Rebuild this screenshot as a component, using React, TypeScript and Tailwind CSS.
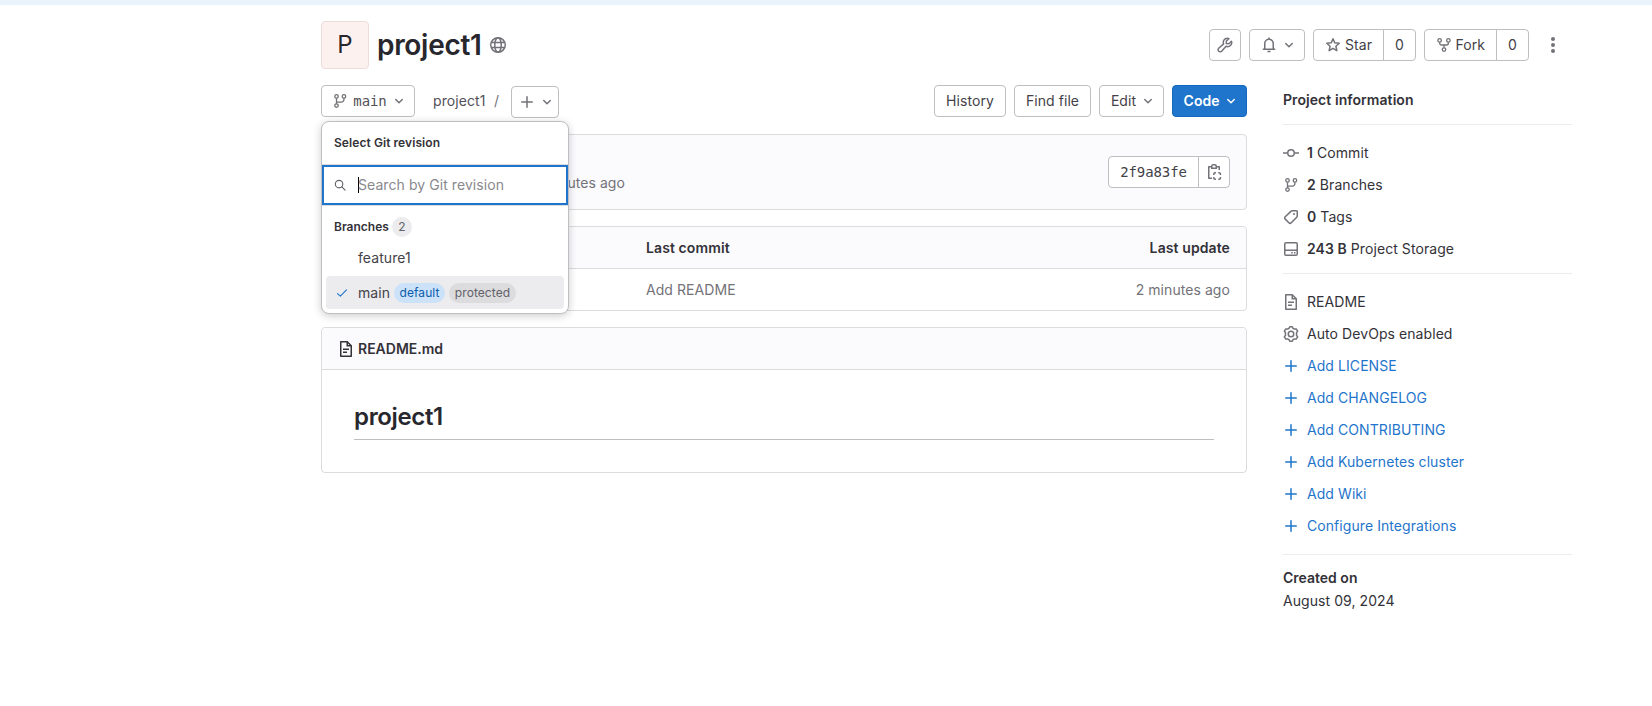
import type { FC, ReactNode } from 'react';

interface IconProps {
  name: keyof typeof icons
  className?: string
}

const icons = {
  branch: (
    <>
      <circle cx="4" cy="2.750" r="2" />
      <circle cx="12.500" cy="2.750" r="2" />
      <circle cx="4" cy="13.250" r="2" />
      <path d="M4 4.750v6.500M4 9.250h5.500a3 3 0 0 0 3-3v-1.500" />
    </>
  ),
  fork: (
    <>
      <circle cx="3" cy="2.750" r="2" />
      <circle cx="13" cy="2.750" r="2" />
      <circle cx="8" cy="13.250" r="2" />
      <path d="M3 4.750v1a2.250 2.250 0 0 0 2.250 2.250h5.500A2.250 2.250 0 0 0 13 5.750v-1M8 8v3.250" />
    </>
  ),
  chevron: <path d="M4.750 6.500 8 9.750l3.250-3.250" strokeLinecap="round" strokeLinejoin="round" />,
  plus: <path d="M8 2.750v10.500M2.750 8h10.500" strokeLinecap="round" />,
  globe: (
    <>
      <circle cx="8" cy="8" r="7.250" />
      <ellipse cx="8" cy="8" rx="3.250" ry="7.250" />
      <path d="M1.500 5.500h13M1.500 10.500h13" />
    </>
  ),
  wrench: (
    <path
      d="M10.250 1.250a4 4 0 0 0-3.600 5.650L1.700 11.300a1.900 1.900 0 1 0 2.900 2.900l4.500-4.900a4 4 0 0 0 5.350-5.050L11.800 6.700 9.300 6.600 9.250 4.200l2.650-2.600a4 4 0 0 0-1.650-.350z"
      strokeLinejoin="round"
    />
  ),
  bell: (
    <path
      d="M8 .500v1.250M3.750 12.250v-5.750a4.250 4.250 0 0 1 8.500 0v5.750M1.750 12.250h12.500M6.500 14.500h3"
      strokeLinejoin="round"
    />
  ),
  star: (
    <path
      d="m8 1.800 1.800 4.050 4.450.450-3.350 2.950.950 4.350L8 11.350 4.150 13.600l.950-4.350L1.750 6.300l4.450-.450z"
      strokeLinejoin="round"
    />
  ),
  search: (
    <>
      <circle cx="6.750" cy="6.750" r="5" />
      <path d="m10.500 10.500 4.250 4.250" strokeLinecap="round" />
    </>
  ),
  check: <path d="m2 8.750 3.750 3.500 8.250-8.500" strokeLinecap="round" strokeLinejoin="round" />,
  document: (
    <>
      <path d="M2.750.750h6.500l4 4v10.500H2.750z" strokeLinejoin="round" />
      <path d="M9.250.750v4h4M5 8.250h6M5 11.250h4" />
    </>
  ),
  commit: (
    <>
      <circle cx="8" cy="8" r="3.250" />
      <path d="M0 8h4.750M11.250 8H16" />
    </>
  ),
  tag: (
    <>
      <path
        d="M9.300 1.750h4.200a.750.750 0 0 1 .750.750v4.300a2 2 0 0 1-.550 1.400l-5.450 5.550a1.700 1.700 0 0 1-2.400 0L2.250 10.150a1.700 1.700 0 0 1 0-2.400l5.600-5.400a2 2 0 0 1 1.450-.600z"
        strokeLinejoin="round"
      />
      <circle cx="11" cy="5" r="1" fill="currentColor" stroke="none" />
    </>
  ),
  disk: (
    <>
      <rect x="1.750" y="1.750" width="12.500" height="12.500" rx="1.250" />
      <path d="M1.750 9.250h12.500M8.200 11.750h1.500M11 11.750h1.500" />
    </>
  ),
  gear: (
    <>
      <circle cx="8" cy="8" r="2.750" />
      <path
        d="M6.750.750h2.500l.650 1.500 1.500.850 1.800-.200 1.450 2.300-1.100 1.300v3l1.100 1.300-1.450 2.300-1.800-.200-1.500.850-.650 1.500h-2.500l-.650-1.500-1.500-.850-1.800.200-1.450-2.300 1.100-1.300v-3l-1.100-1.300 1.450-2.300 1.800.200 1.500-.850z"
        strokeLinejoin="round"
      />
    </>
  ),
  clipboard: (
    <>
      <path d="M5.250 2.750h-2.500v11.500H6M10.750 2.750h2.500V6" strokeLinejoin="round" />
      <path d="M5.750 4.250v-2A1.500 1.500 0 0 1 7.250.750h1.500a1.500 1.500 0 0 1 1.500 1.500v2z" />
      <path d="M7.750 11v-.750a1.500 1.500 0 0 1 1.500-1.500H10M12.250 8.750H13a1.500 1.500 0 0 1 1.500 1.500V11M14.500 13v.750a1.500 1.500 0 0 1-1.500 1.500h-.750M10 15.250h-.750a1.500 1.500 0 0 1-1.500-1.500V13" />
    </>
  ),
  dots: (
    <g fill="currentColor" stroke="none">
      <circle cx="8" cy="2" r="2" />
      <circle cx="8" cy="8" r="2" />
      <circle cx="8" cy="14" r="2" />
    </g>
  ),
};

const Icon: FC<IconProps> = ({ name, className = 'size-4 text-[#737278]' }) => (
  <svg
    className={`shrink-0 ${className}`}
    viewBox="0 0 16 16"
    fill="none"
    stroke="currentColor"
    strokeWidth="1.5"
  >
    {icons[name]}
  </svg>
);

interface ButtonProps {
  children: ReactNode
  className?: string
}

const Button: FC<ButtonProps> = ({ children, className = '' }) => (
  <button
    type="button"
    className={`flex h-8 shrink-0 items-center justify-center rounded border border-[#bfbfc3] bg-white ${className}`}
  >
    {children}
  </button>
);

const stats: { icon: IconProps['name'], value: string, label: string }[] = [
  { icon: 'commit', value: '1', label: 'Commit' },
  { icon: 'branch', value: '2', label: 'Branches' },
  { icon: 'tag', value: '0', label: 'Tags' },
  { icon: 'disk', value: '243 B', label: 'Project Storage' },
];

const addLinks = [
  'Add LICENSE',
  'Add CHANGELOG',
  'Add CONTRIBUTING',
  'Add Kubernetes cluster',
  'Add Wiki',
  'Configure Integrations',
];

const ProjectHeader: FC = () => (
  <header className="flex h-12 items-center">
    <div className="flex size-12 items-center justify-center rounded border border-[#ecdcda] bg-[#fcf1ef] text-2xl text-[#28272d]">
      P
    </div>
    <h1 className="ml-2 w-[105px] text-[28px] font-semibold tracking-[-0.3px] whitespace-nowrap text-[#28272d]">project1</h1>
    <Icon name="globe" className="ml-2 size-4 text-[#737278]" />
    <div className="mr-[3px] ml-auto flex items-center gap-2">
      <Button className="w-8"><Icon name="wrench" /></Button>
      <Button className="w-14 gap-1 pl-1">
        <Icon name="bell" />
        <Icon name="chevron" />
      </Button>
      <div className="flex">
        <Button className="w-[71px] gap-1 rounded-r-none">
          <Icon name="star" />
          <span className="w-[27px]">Star</span>
        </Button>
        <Button className="-ml-px w-[33px] rounded-l-none">0</Button>
      </div>
      <div className="flex">
        <Button className="w-[73px] gap-[5px] rounded-r-none">
          <Icon name="fork" className="size-3.5 text-[#737278]" />
          <span className="w-[29px]">Fork</span>
        </Button>
        <Button className="-ml-px w-[33px] rounded-l-none">0</Button>
      </div>
      <button type="button" className="flex size-8 items-center justify-center">
        <Icon name="dots" />
      </button>
    </div>
  </header>
);

const RevisionDropdown: FC = () => (
  <div className="absolute top-9 left-0 z-10 h-[193px] w-[248px] rounded-lg border border-[#bfbfc3] bg-white shadow-[0_2px_8px_rgba(0,0,0,0.2)]">
    <div className="flex h-[43px] items-center border-b border-[#dcdcde] px-3 text-xs font-semibold text-[#333238]">
      Select Git revision
    </div>
    <div className="flex h-10 items-center border-2 border-[#1f75cb] px-2.5">
      <Icon name="search" className="size-3 text-[#626168]" />
      <span className="ml-3 h-4 w-px bg-black" />
      <span className="-ml-px text-[#89888d]">Search by Git revision</span>
    </div>
    <div className="flex h-[42px] items-center border-t border-[#dcdcde] px-3 text-xs">
      <span className="w-[54px] font-semibold tracking-normal text-[#333238]">Branches</span>
      <span className="ml-1 flex size-5 items-center justify-center rounded-full bg-[#ececef] text-[#626168]">2</span>
    </div>
    <div className="flex h-[29px] items-start pt-px pl-9 leading-5">feature1</div>
    <div className="mx-1 flex h-[33px] items-center rounded bg-[#ececef] pl-2.5">
      <Icon name="check" className="size-3 text-[#1f75cb]" />
      <span className="ml-2.5 w-[32px]">main</span>
      <span className="ml-1 flex h-5 w-[51px] items-center justify-center rounded-full bg-[#cbe2f9] text-xs text-[#0b5cad]">default</span>
      <span className="ml-1 flex h-5 w-[67px] items-center justify-center rounded-full bg-[#dcdcde] text-xs text-[#626168]">protected</span>
    </div>
  </div>
);

const TreeControls: FC = () => (
  <div className="flex h-[33px] items-start">
    <div className="relative">
      <Button className="w-[94px] pl-1 font-['DejaVu_Sans_Mono',monospace] text-sm tracking-[-0.1px] text-[#535158]">
        <Icon name="branch" className="mr-1.5 size-3.5 text-[#737278]" />
        main
        <Icon name="chevron" className="ml-1 size-4 text-[#737278]" />
      </Button>
      <RevisionDropdown />
    </div>
    <span className="ml-[18px] w-[53px] leading-8 text-[#535158]">project1</span>
    <span className="ml-2 w-[6px] leading-8 text-[#737278]">/</span>
    <Button className="mt-px ml-[11px] w-12 gap-1 pl-1">
      <Icon name="plus" />
      <Icon name="chevron" />
    </Button>
    <div className="ml-auto flex gap-2">
      <Button className="w-[72px]">History</Button>
      <Button className="w-[77px]">Find file</Button>
      <Button className="w-[65px] gap-1 pl-1">
        Edit
        <Icon name="chevron" />
      </Button>
      <button
        type="button"
        className="flex h-8 w-[75px] items-center justify-center gap-1 rounded border border-[#1068bf] bg-[#1f75cb] pl-1 font-semibold tracking-normal text-white"
      >
        Code
        <Icon name="chevron" className="size-4 text-white" />
      </button>
    </div>
  </div>
);

const Sidebar: FC = () => (
  <aside className="ml-9 w-[289px] text-[#333238]">
    <h2 className="flex h-[30px] items-center font-semibold">Project information</h2>
    <ul className="mt-[9px] h-[149px] border-t border-[#ececef] pt-3">
      {stats.map(({ icon, value, label }) => (
        <li key={label} className="flex h-8 items-center">
          <Icon name={icon} className={icon === 'branch' ? 'mx-px size-3.5 text-[#737278]' : 'size-4 text-[#737278]'} />
          <span className="ml-2">
            <b className="font-semibold">{value}</b> {label}
          </span>
        </li>
      ))}
    </ul>
    <ul className="h-[281px] border-t border-[#ececef] pt-3">
      <li className="flex h-8 items-center gap-2"><Icon name="document" />README</li>
      <li className="flex h-8 items-center gap-2"><Icon name="gear" />Auto DevOps enabled</li>
      {addLinks.map((link) => (
        <li key={link} className="flex h-8 items-center gap-2 text-[#1f75cb]">
          <Icon name="plus" className="size-4 text-[#1f75cb]" />
          {link}
        </li>
      ))}
    </ul>
    <div className="border-t border-[#ececef] pt-[11px]">
      <p className="leading-[23px] font-semibold tracking-normal">Created on</p>
      <p className="leading-[23px]">August 09, 2024</p>
    </div>
  </aside>
);

export default function App() {
  return (
    <div className="h-[706px] overflow-hidden bg-white font-['Inter',sans-serif] text-sm font-[375] tracking-[0.07px] text-[#434248]">
      <div className="h-[5px] bg-[#e9f3fc]" />
      <div className="ml-[321px] w-[1251px] pt-4">
        <ProjectHeader />
        <div className="mt-4 flex">
          <main className="w-[926px]">
            <TreeControls />

            <section className="mt-4 flex h-[76px] items-center rounded border border-[#dcdcde] bg-[#fbfafd] pr-4">
              <span className="mt-[22px] w-[303px] text-right text-[#737278]">2 minutes ago</span>
              <div className="ml-auto flex">
                <Button className="w-[91px] rounded-r-none font-['DejaVu_Sans_Mono',monospace] tracking-[-0.1px] text-[#434248]">
                  2f9a83fe
                </Button>
                <Button className="-ml-px w-8 rounded-l-none"><Icon name="clipboard" /></Button>
              </div>
            </section>

            <section className="mt-4 h-[85px] rounded border border-[#dcdcde]">
              <div className="flex h-[42px] items-center rounded-t border-b border-[#dcdcde] bg-[#fbfafd] pr-4 pl-[324px] font-semibold tracking-[0.1px] text-[#333238]">
                <span>Last commit</span>
                <span className="ml-auto">Last update</span>
              </div>
              <div className="flex h-[41px] items-center pr-4 pl-[324px] text-[#737278]">
                <span>Add README</span>
                <span className="ml-auto">2 minutes ago</span>
              </div>
            </section>

            <article className="mt-4 h-[146px] rounded border border-[#dcdcde]">
              <div className="flex h-[42px] items-center gap-1 rounded-t border-b border-[#dcdcde] bg-[#fbfafd] px-4 font-semibold tracking-normal text-[#333238]">
                <Icon name="document" className="size-4 text-[#333238]" />
                README.md
              </div>
              <div className="px-8 pt-7">
                <h2 className="h-[42px] border-b border-[#bfbfc3] text-2xl leading-[38px] font-semibold tracking-[-0.35px] text-[#28272d]">
                  project1
                </h2>
              </div>
            </article>
          </main>
          <Sidebar />
        </div>
      </div>
    </div>
  );
}
